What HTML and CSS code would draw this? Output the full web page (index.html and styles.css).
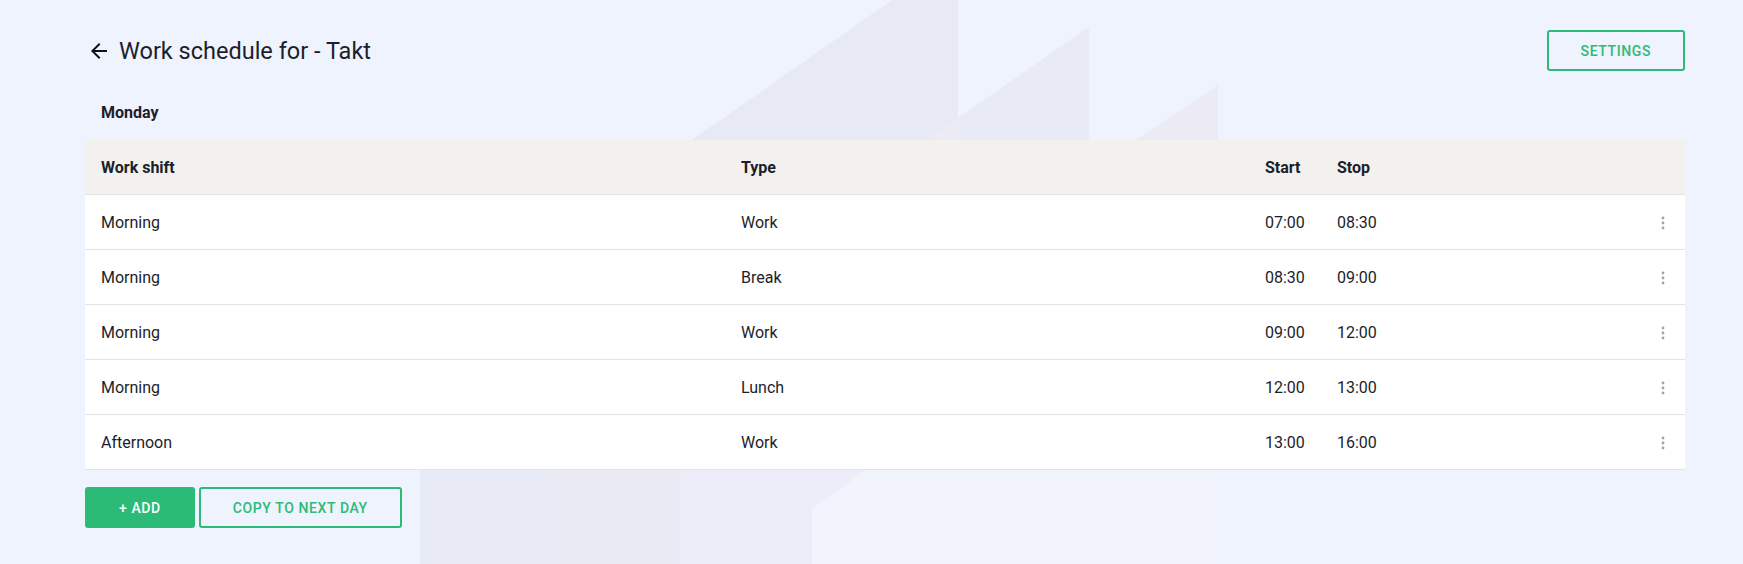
FILE: index.html
```html
<!DOCTYPE html>
<html>
<head>
    <meta charset="UTF-8">
    <title>Work schedule for - Takt</title>
    <link rel="stylesheet" href="styles.css">
</head>
<body>
    <div class="appbar-shadow"></div>

    <!-- factory silhouette behind the page -->
    <svg class="backdrop" viewBox="0 0 1743 564" width="1743" height="564" aria-hidden="true">
        <polygon points="692,140 895,-2 958,-2 958,140" fill="#e7e9f5"/>
        <polygon points="926,140 1089,27 1089,140" fill="#e8ebf6"/>
        <polygon points="926,140 958,118 958,140" fill="#eceaf4"/>
        <polygon points="1136,140 1218,85 1218,140" fill="#ecebf5"/>
        <rect x="420" y="470" width="131" height="94" fill="#e7e9f5"/>
        <rect x="551" y="470" width="129" height="94" fill="#eaeaf5"/>
        <polygon points="680,470 866,470 812,509 812,564 680,564" fill="#ecedf8"/>
        <polygon points="866,470 1214,470 1214,564 812,564 812,509" fill="#f1f3fd"/>
    </svg>

    <main class="page">
        <div class="page-header">
            <h1 class="page-title">
                <a href="#" class="back-link" title="Back">
                    <svg viewBox="0 0 24 24" width="24" height="24"><path d="M20 11H7.83l5.59-5.59L12 4l-8 8 8 8 1.41-1.41L7.83 13H20v-2z"/></svg>
                </a>
                Work schedule for - Takt
            </h1>
            <button class="btn btn-outline">Settings</button>
        </div>

        <h2 class="day-label">Monday</h2>

        <table class="schedule-table">
            <colgroup>
                <col style="width: 640px">
                <col style="width: 524px">
                <col style="width: 72px">
                <col>
                <col style="width: 44px">
            </colgroup>
            <thead>
                <tr>
                    <th>Work shift</th>
                    <th>Type</th>
                    <th>Start</th>
                    <th>Stop</th>
                    <th></th>
                </tr>
            </thead>
            <tbody id="scheduleRows"></tbody>
        </table>

        <div class="actions">
            <button class="btn btn-primary">+ Add</button>
            <button class="btn btn-outline">Copy to next day</button>
        </div>
    </main>

    <script>
        const rows = [
            { shift: 'Morning', type: 'Work', start: '07:00', stop: '08:30' },
            { shift: 'Morning', type: 'Break', start: '08:30', stop: '09:00' },
            { shift: 'Morning', type: 'Work', start: '09:00', stop: '12:00' },
            { shift: 'Morning', type: 'Lunch', start: '12:00', stop: '13:00' },
            { shift: 'Afternoon', type: 'Work', start: '13:00', stop: '16:00' }
        ];

        const moreIcon = '<svg viewBox="0 0 20 20" width="20" height="20"><circle cx="10" cy="5" r="1.4"/><circle cx="10" cy="10" r="1.4"/><circle cx="10" cy="15" r="1.4"/></svg>';

        const tbody = document.getElementById('scheduleRows');
        rows.forEach(row => {
            const tr = document.createElement('tr');
            tr.innerHTML = `
                <td>${row.shift}</td>
                <td>${row.type}</td>
                <td>${row.start}</td>
                <td>${row.stop}</td>
                <td class="cell-menu"><button class="menu-btn">${moreIcon}</button></td>`;
            tbody.appendChild(tr);
        });
    </script>
</body>
</html>
```

FILE: styles.css
```css
body {
    font-family: Roboto, "Noto Sans", sans-serif;
    background-color: #eff3fe;
    color: #1c1e2a;
    margin: 0;
    min-height: 100vh;
    position: relative;
    overflow: hidden;
}
.appbar-shadow {
    position: absolute;
    top: 0;
    left: 0;
    right: 0;
    height: 0;
    box-shadow: 0 1px 8px rgba(60, 64, 100, 0.22);
    z-index: 2;
}
.backdrop {
    position: absolute;
    top: 0;
    left: 0;
    z-index: 0;
}
.page {
    position: relative;
    z-index: 1;
    padding: 30px 58px 0 85px;
}
.page-header {
    display: flex;
    justify-content: space-between;
    align-items: center;
    height: 41px;
}
.page-title {
    display: flex;
    align-items: center;
    margin: 0;
    font-size: 23.5px;
    font-weight: 400;
    line-height: 28px;
}
.back-link {
    display: flex;
    margin: 0 8px 0 2px;
    color: #111;
}
.back-link svg {
    fill: currentColor;
}
.day-label {
    margin: 0;
    padding: 32px 16px 17px;
    font-size: 16px;
    font-weight: 700;
    line-height: 20px;
}
.schedule-table {
    width: 100%;
    border-collapse: collapse;
    table-layout: fixed;
    background: white;
}
.schedule-table th,
.schedule-table td {
    height: 54px;
    padding: 0 16px;
    text-align: left;
    font-size: 16px;
    border-bottom: 1px solid #e3e3e3;
}
.schedule-table th {
    background: #f2f1ed;
    font-weight: 700;
}
.schedule-table .cell-menu {
    padding: 0;
    text-align: center;
}
.menu-btn {
    background: none;
    border: none;
    padding: 0;
    margin: 2px auto 0;
    display: flex;
    cursor: pointer;
}
.menu-btn svg {
    fill: #a3a3a3;
}
.actions {
    display: flex;
    gap: 4px;
    margin-top: 17px;
}
.btn {
    height: 41px;
    padding: 0 32px;
    border: 2px solid #2bbb76;
    border-radius: 3px;
    background: transparent;
    color: #2bbb76;
    font-family: Roboto, sans-serif;
    font-size: 14px;
    font-weight: 500;
    letter-spacing: 0.6px;
    text-transform: uppercase;
    cursor: pointer;
}
.btn-primary {
    background: #2bbb76;
    color: white;
}
```
